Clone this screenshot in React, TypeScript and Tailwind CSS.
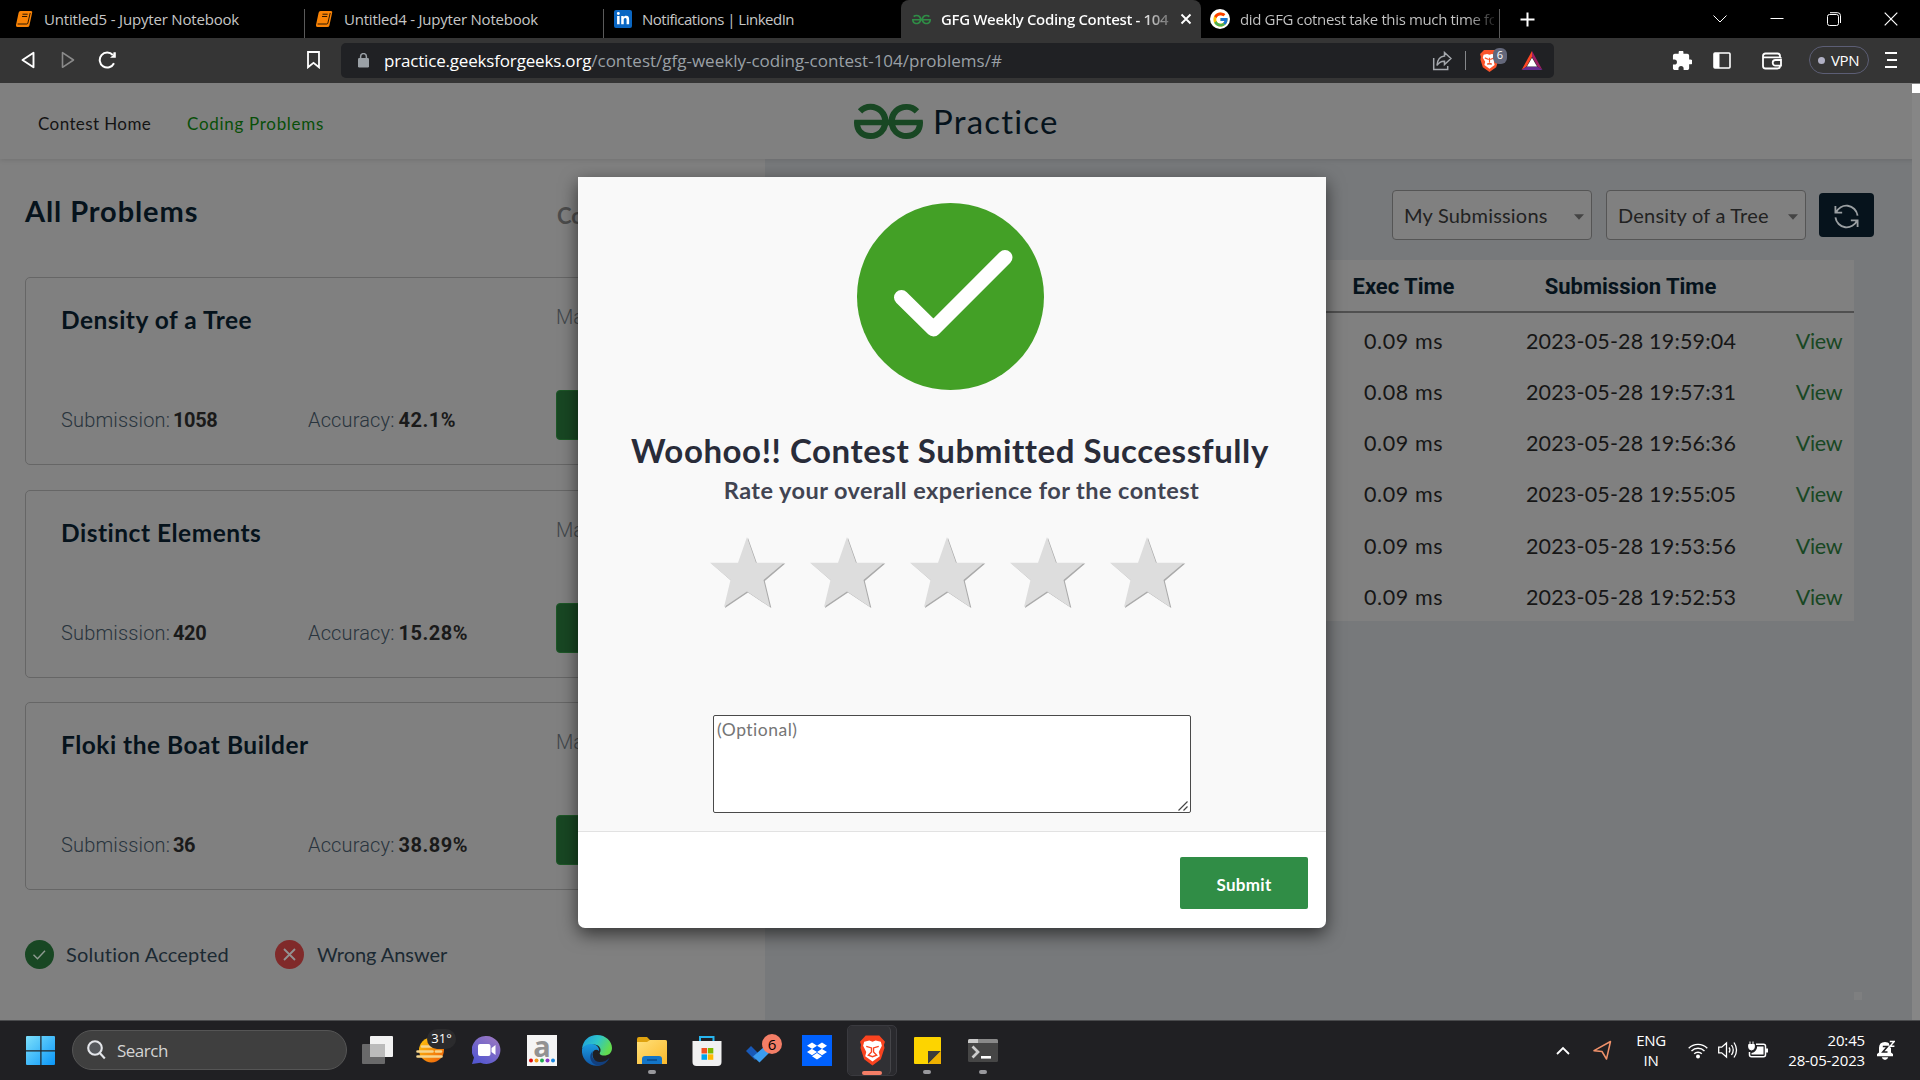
import React from "react";
import { FcGoogle } from "react-icons/fc";
import { FaDropbox, FaLinkedinIn } from "react-icons/fa";
import { SiGeeksforgeeks } from "react-icons/si";

const problems = [
  { title: "Density of a Tree", submissions: "1058", accuracy: "42.1%" },
  { title: "Distinct Elements", submissions: "420", accuracy: "15.28%" },
  { title: "Floki the Boat Builder", submissions: "36", accuracy: "38.89%" },
];

const submissions = [
  ["0.09 ms", "2023-05-28 19:59:04"],
  ["0.08 ms", "2023-05-28 19:57:31"],
  ["0.09 ms", "2023-05-28 19:56:36"],
  ["0.09 ms", "2023-05-28 19:55:05"],
  ["0.09 ms", "2023-05-28 19:53:56"],
  ["0.09 ms", "2023-05-28 19:52:53"],
];

function NotebookIcon() {
  return (
    <svg className="h-[18px] w-[18px]" viewBox="0 0 18 18">
      <path d="M5.500 1H16q1.600 0 1.200 1.600L14.400 15.500q-.4 1.500-2 1.500H2.500Q.6 17 1 15L3.600 2.700Q4 1 5.500 1z" fill="#f98306" />
      <path d="M7.500 4.200h5.200M7 6.500h5.200M2.600 14h9.200q.9 0 1.100-1L15.200 3" stroke="#2a1600" strokeWidth="1" fill="none" />
    </svg>
  );
}

function TabBar() {
  return (
    <div className="flex h-[38px] bg-black text-[15px] leading-[36px] text-[#c6c6c6]">
      <div className="flex w-[305px] items-center pl-[15px]">
        <NotebookIcon />
        <span className="ml-[11px] flex-1 tracking-[-0.18px] whitespace-nowrap">Untitled5 - Jupyter Notebook</span>
        <i className="mt-[9px] h-[29px] w-px bg-[#5a5a5a]" />
      </div>
      <div className="flex w-[299px] items-center pl-[10px]">
        <NotebookIcon />
        <span className="ml-[11px] flex-1 tracking-[-0.22px] whitespace-nowrap">Untitled4 - Jupyter Notebook</span>
        <i className="mt-[9px] h-[29px] w-px bg-[#5a5a5a]" />
      </div>
      <div className="flex w-[297px] items-center pl-[10px]">
        <span className="flex h-[18px] w-[18px] items-center justify-center rounded-[2px] bg-[#0a66c2] text-white">
          <FaLinkedinIn size={14} />
        </span>
        <span className="ml-[10px] tracking-[-0.5px] whitespace-nowrap">Notifications | LinkedIn</span>
      </div>
      <div className="flex w-[300px] items-center rounded-t-[8px] bg-[#353535] pl-[11px] font-semibold text-white">
        <SiGeeksforgeeks size={19} color="#2f8d46" />
        <span className="ml-[10px] w-[234px] overflow-hidden bg-gradient-to-r from-white from-85% to-[#555] bg-clip-text tracking-[-0.35px] whitespace-nowrap text-transparent">
          GFG Weekly Coding Contest - 104
        </span>
        <svg className="ml-[5px] h-[12px] w-[12px]" viewBox="0 0 12 12">
          <path d="M1.500 1.500l9 9M10.500 1.500l-9 9" stroke="#fff" strokeWidth="1.900" />
        </svg>
      </div>
      <div className="flex w-[299px] items-center pl-[9px]">
        <span className="flex h-[20px] w-[20px] items-center justify-center rounded-full bg-white">
          <FcGoogle size={17} />
        </span>
        <span className="ml-[10px] w-[254px] overflow-hidden bg-gradient-to-r from-[#c6c6c6] from-90% to-[#222] bg-clip-text tracking-[-0.36px] whitespace-nowrap text-transparent">
          did GFG cotnest take this much time for
        </span>
        <i className="mt-[9px] ml-auto h-[29px] w-px bg-[#5a5a5a]" />
      </div>
      <div className="flex flex-1 items-center pl-[20px]">
        <svg className="h-[15px] w-[15px]" viewBox="0 0 15 15">
          <path d="M7.500.5v14M.5 7.500h14" stroke="#fff" strokeWidth="2" />
        </svg>
        <svg className="ml-[177px] h-[14px] w-[16px]" viewBox="0 0 16 14" fill="none" stroke="#fff">
          <path d="M1.500 3.500L8 10l6.500-6.500" />
        </svg>
        <svg className="ml-[42px] h-[14px] w-[14px]" viewBox="0 0 14 14">
          <path d="M.5 6.500h13" stroke="#fff" />
        </svg>
        <svg className="ml-[43px] h-[14px] w-[14px]" viewBox="0 0 14 14" fill="none" stroke="#fff">
          <rect x=".5" y="2.500" width="11" height="11" rx="2" />
          <path d="M3 .7h7.500q3 0 3 3V11" />
        </svg>
        <svg className="ml-[43px] h-[14px] w-[14px]" viewBox="0 0 14 14" stroke="#fff" strokeWidth="1.200">
          <path d="M.7.7l12.600 12.600M13.300.7L.7 13.300" />
        </svg>
      </div>
    </div>
  );
}

function Toolbar() {
  return (
    <div className="flex h-[45px] items-center bg-[#353535] pl-[21px]">
      <svg className="-mt-px h-[18px] w-[14px]" viewBox="0 0 14 18" fill="none" stroke="#fff" strokeWidth="1.900" strokeLinejoin="round">
        <path d="M12.500 1.700v14.600L1.500 9z" />
      </svg>
      <svg className="-mt-px ml-[26px] h-[18px] w-[14px]" viewBox="0 0 14 18" fill="none" stroke="#8a8a8a" strokeWidth="1.600" strokeLinejoin="round">
        <path d="M1.500 1.700v14.600L12.500 9z" />
      </svg>
      <svg className="-mt-px ml-[23px] h-[18px] w-[19px]" viewBox="0 0 19 18" fill="none" stroke="#fff" strokeWidth="2">
        <path d="M16 12.300A7.500 7.500 0 1 1 14.800 4" />
        <path d="M12 6.800h5.800V1.200h-2.300l-.3 2.800z" fill="#fff" stroke="none" />
      </svg>
      <svg className="-mt-px ml-[190px] h-[18px] w-[13px]" viewBox="0 0 13 18" fill="none" stroke="#fff" strokeWidth="1.800">
        <path d="M1 1h11v15.300l-5.500-4.500L1 16.300z" />
      </svg>
      <div className="ml-[21px] flex h-[35px] w-[1213px] items-center rounded-[5px] bg-[#202124] pl-[17px] text-[17px] text-[#9aa0a6]">
        <svg className="h-[15px] w-[11px]" viewBox="0 0 11 15">
          <rect y="5" width="11" height="9.500" rx="1.200" fill="#9aa0a6" />
          <path d="M2.600 6V3.500a2.900 2.900 0 0 1 5.800 0V6" fill="none" stroke="#9aa0a6" strokeWidth="1.500" />
        </svg>
        <span className="ml-[15px] tracking-[-0.18px] text-white">practice.geeksforgeeks.org</span>
        <span>/contest/gfg-weekly-coding-contest-104/problems/#</span>
        <svg className="ml-auto h-[20px] w-[20px]" viewBox="0 0 20 20" fill="none" stroke="#a5a8ad" strokeWidth="1.500">
          <path d="M1.700 7v11.500h14V15M12.500 1.500l6.500 6-6.500 6v-3.300q-5-.2-7.500 4.300.4-8.500 7.500-9.400z" />
        </svg>
        <i className="ml-[13px] h-[19px] w-px bg-[#85878a]" />
        <div className="relative ml-[14px] h-[22px] w-[19px]">
          <svg viewBox="0 0 24 28" className="h-[22px] w-[19px]">
            <path d="M5 0h14l5 5-1 4 .5 3-3 10-8.500 6-8.500-6-3-10L1 9 0 5z" fill="#fb542b" />
            <path d="M4.500 6l4.500-1 3 1 3-1 4.500 1 1 4-3 5 1 4-6.500 5-6.500-5 1-4-3-5z" fill="#fff" />
            <path d="M6 10l5 2M18 10l-5 2M9 18l3-1 3 1M12 10v6" stroke="#fb542b" strokeWidth="1.500" />
          </svg>
          <span className="absolute -top-[2px] left-[13px] flex h-[16px] w-[14px] items-center justify-center rounded-[6px] bg-[#63677a] text-[11px] text-white">6</span>
        </div>
        <svg className="mr-[11px] ml-[22px] h-[19px] w-[22px]" viewBox="0 0 22 20">
          <path d="M11 0L0 20l5-3.500L11 6z" fill="#ff4724" />
          <path d="M11 0l11 20-5-3.500L11 6z" fill="#9e1f63" />
          <path d="M0 20h22l-5-3.500H5z" fill="#662d91" />
          <path d="M11 7.200l5.300 9.200H5.700z" fill="#fff" />
        </svg>
      </div>
      <svg className="ml-[118px] h-[20px] w-[20px]" viewBox="1 2 21 21" fill="#fff">
        <path d="M20.500 11H19V7c0-1.100-.9-2-2-2h-4V3.500a2.500 2.500 0 0 0-5 0V5H4c-1.100 0-2 .9-2 2v3.800h1.500a2.700 2.700 0 0 1 0 5.400H2V20c0 1.100.9 2 2 2h3.800v-1.500a2.700 2.700 0 0 1 5.400 0V22H17c1.100 0 2-.9 2-2v-4h1.500a2.500 2.500 0 0 0 0-5z" />
      </svg>
      <svg className="ml-[21px] h-[17px] w-[18px]" viewBox="0 0 18 17">
        <rect x="1" y="1" width="16" height="15" rx="1" fill="none" stroke="#fff" strokeWidth="1.600" />
        <path d="M1 1h5.500v15H1z" fill="#fff" />
      </svg>
      <svg className="ml-[31px] h-[18px] w-[20px]" viewBox="0 0 20 18" fill="none" stroke="#fff" strokeWidth="1.800">
        <path d="M18 5.500V4q0-2.500-2.500-2.500h-12Q1 1.500 1 4v10q0 2.500 2.500 2.500h12q2.500 0 2.500-2.500M1.500 5.300H18q1 .2 1 1.200M19 8h-5.500a2.800 2.800 0 0 0 0 5.600H19z" />
      </svg>
      <div className="-mt-px ml-[27px] flex h-[28px] w-[60px] items-center rounded-full border border-[#5c5e75] pl-[8px] text-[15px] text-white">
        <i className="h-[7px] w-[7px] rounded-full bg-[#b0b0c4]" />
        <span className="ml-[6px] tracking-[-0.400px]">VPN</span>
      </div>
      <svg className="-mt-px ml-[16px] h-[18px] w-[12px]" viewBox="0 0 12 18" stroke="#fff" strokeWidth="2">
        <path d="M0 2h12M2 9h10M0 16h12" />
      </svg>
    </div>
  );
}

function ProblemCard({ title, submissions: count, accuracy }: { title: string; submissions: string; accuracy: string }) {
  return (
    <div className="flex h-[188px] w-[715px] rounded-[5px] border border-[#666] pl-[35px]">
      <div className="w-[495px] pt-[26px]">
        <h3 className="text-[24.500px] leading-[32px] font-bold tracking-[0.5px] text-[#06131c]">{title}</h3>
        <div className="mt-[70px] flex font-['Roboto'] text-[20px] leading-[28px] font-light tracking-[0.15px] text-[#29343d]">
          <div className="w-[247px]">
            Submission: <b className="-ml-[2px] font-bold tracking-[-0.4px] text-[#1a1a1a]">{count}</b>
          </div>
          <div>
            Accuracy: <b className="-ml-[1px] font-bold tracking-[0.5px] text-[#1a1a1a]">{accuracy}</b>
          </div>
        </div>
      </div>
      <div className="flex flex-col items-start pt-[25px] font-['Roboto'] text-[20px] leading-[28px] font-light text-[#42474b]">
        <span>Marks</span>
        <div className="mt-[59px] h-[50px] w-[140px] rounded-[4px] border border-[#1d5727] bg-[#184723]" />
      </div>
    </div>
  );
}

function ProblemsPanel() {
  return (
    <section className="h-[861px] w-[765px] pl-[25px]">
      <div className="flex pt-[32px]">
        <h2 className="w-[532px] text-[29px] leading-[40px] font-bold tracking-[0.900px] text-[#06131c]">All Problems</h2>
        <span className="pt-[5px] text-[22px] leading-[40px] font-bold text-[#4c4c4c]">Contest</span>
      </div>
      <div className="mt-[41px] flex flex-col gap-[24.500px]">
        {problems.map((p) => (
          <ProblemCard key={p.title} {...p} />
        ))}
      </div>
      <div className="mt-[49px] flex items-center text-[20px] leading-[30px] text-[#1b2932]">
        <svg className="h-[29px] w-[29px]" viewBox="0 0 29 29">
          <circle cx="14.500" cy="14.500" r="14.500" fill="#184723" />
          <path d="M8.500 14.800l4 4 7.500-8" fill="none" stroke="#8f9b92" strokeWidth="1.400" />
        </svg>
        <span className="ml-[12px] w-[209px] tracking-[0.2px]">Solution Accepted</span>
        <svg className="h-[29px] w-[29px]" viewBox="0 0 29 29">
          <circle cx="14.500" cy="14.500" r="14.500" fill="#802a2a" />
          <path d="M9 9l11 11M20 9L9 20" fill="none" stroke="#929292" strokeWidth="1.800" />
        </svg>
        <span className="ml-[13px] tracking-[-0.05px]">Wrong Answer</span>
      </div>
    </section>
  );
}

function Select({ label }: { label: string }) {
  return (
    <div className="flex h-[50px] w-[200px] items-center rounded-[4px] border border-[#555] bg-[#808080] pr-[7px] pl-[11px] text-[20px] text-[#222]">
      <span className="flex-1 tracking-[0.2px] whitespace-nowrap">{label}</span>
      <svg className="mt-[3px] h-[6px] w-[10px]" viewBox="0 0 11 6">
        <path d="M0 0h11L5.500 6z" fill="#444" />
      </svg>
    </div>
  );
}

function SubmissionsPanel() {
  return (
    <section className="h-[861px] w-[1147px] bg-[#77797b]">
      <div className="flex items-center justify-end gap-[14px] pt-[31px] pr-[38px]">
        <Select label="My Submissions" />
        <Select label="Density of a Tree" />
        <div className="-ml-px flex h-[44px] w-[55px] items-center justify-center rounded-[4px] bg-[#06131c]">
          <svg className="mt-[3px] h-[27px] w-[27px]" viewBox="0 0 28 28" fill="none" stroke="#9a9fa2" strokeWidth="1.900">
            <path d="M2.500 3v7H9.500M25.500 25v-7H18.500M3 10A11.800 12 0 0 1 25.500 13M25 18A11.800 12 0 0 1 2.500 15" />
          </svg>
        </div>
      </div>
      <div className="mt-[20px] ml-[24px] w-[1065px] bg-[#808080]">
        <div className="flex h-[53px] justify-end border-b-2 border-[#505050] pt-[2px] text-center font-['Roboto'] text-[22px] leading-[50px] font-bold text-[#06131c]">
          <span className="w-[149px]">Exec Time</span>
          <span className="w-[305px]">Submission Time</span>
          <span className="w-[71px]" />
        </div>
        {submissions.map(([time, date]) => (
          <div key={date} className="flex h-[51.300px] justify-end pt-[2.500px] text-center text-[21.500px] leading-[51px] text-[#161616]">
            <span className="w-[149px] tracking-[0.600px]">{time}</span>
            <span className="w-[306px] tracking-[0.180px]">{date}</span>
            <span className="w-[70px] tracking-[-0.3px] text-[#184723]">View</span>
          </div>
        ))}
      </div>
      <div className="mt-[371px] mr-[50px] ml-auto h-[8px] w-[8px] bg-[#7e7f80]" />
    </section>
  );
}

function Modal() {
  return (
    <div className="absolute top-[94px] left-[578px] flex h-[751px] w-[748px] flex-col rounded-[7px] rounded-t-none bg-white shadow-[0_6px_18px_rgba(0,0,0,0.6)]">
      <div className="flex h-[655px] flex-col items-center border-b border-[#e2e2e2] bg-[#f9f9f9] pt-[25px]">
        <svg className="mr-[5px] h-[188px] w-[188px]" viewBox="0 0 188 188">
          <circle cx="94.500" cy="94.500" r="93.500" fill="#43a026" />
          <path d="M45.500 95.500L77.500 127 149 55.500" fill="none" stroke="#fff" strokeWidth="15" strokeLinecap="round" strokeLinejoin="round" />
        </svg>
        <h1 className="mt-[38px] mr-[4px] text-[33px] leading-[44px] font-bold tracking-[0.570px] whitespace-nowrap text-[#292c39]">
          Woohoo!! Contest Submitted Successfully
        </h1>
        <h2 className="ml-[19px] text-[23.500px] leading-[36px] font-bold tracking-[0.450px] whitespace-nowrap text-[#414452]">
          Rate your overall experience for the contest
        </h2>
        <div className="mt-[29px] mr-[8px] flex gap-[24px]">
          {[0, 1, 2, 3, 4].map((n) => (
            <svg key={n} className="h-[72px] w-[76px]" viewBox="0 0 76 72">
              <path d="M38 1L47 26.500H75.300L54.800 44 61.300 71 38 55.500 15 71 21.500 44 1.500 26.500H29.500z" fill="#aaa" />
              <path d="M37 0L46 25.800H74L53.500 43 60 70 37 54.500 14 70 20.500 43 0 25.800H28z" fill="#ddd" />
            </svg>
          ))}
        </div>
        <div className="relative mt-[106px] h-[98px] w-[478px]">
          <textarea
            placeholder="(Optional)"
            className="block h-[98px] w-[478px] resize-none rounded-[2px] border border-[#4a4a4a] bg-white px-[3px] py-[1px] text-[17.500px] leading-[26px] tracking-[0.500px] outline-none placeholder:text-[#757575]"
          />
          <svg className="absolute right-[3px] bottom-[2px] h-[10px] w-[10px]" viewBox="0 0 10 10" stroke="#444" strokeWidth="1.200">
            <path d="M.5 9.500l9-9M5.500 9.500l4-4" />
          </svg>
        </div>
      </div>
      <div className="flex flex-1 items-start justify-end pt-[25px] pr-[18px]">
        <button className="h-[52px] w-[128px] rounded-[2px] bg-[#308d46] pt-[4px] text-[17px] font-bold tracking-[0.300px] text-white">Submit</button>
      </div>
    </div>
  );
}

function Page() {
  return (
    <main className="relative h-[937px] overflow-hidden bg-[#808080] font-['Lato',sans-serif]">
      <nav className="relative flex h-[76px] pl-[38px] text-[17px] leading-[24px] shadow-[0_1px_5px_rgba(0,0,0,0.12)]">
        <span className="w-[149px] pt-[29px] tracking-[0.400px] text-[#141414]">Contest Home</span>
        <span className="w-[667px] pt-[29px] tracking-[0.700px] text-[#084f08]">Coding Problems</span>
        <SiGeeksforgeeks className="mt-[4px]" size={69} color="#184723" />
        <span className="pt-[18px] pl-[10px] text-[33px] leading-[40px] tracking-[1.200px] text-[#06131c]">Practice</span>
      </nav>
      <div className="flex">
        <ProblemsPanel />
        <SubmissionsPanel />
      </div>
      <div className="absolute top-0 right-0 h-[937px] w-[8px] bg-[#868686]">
        <div className="mt-px h-[9px] bg-white" />
      </div>
      <Modal />
    </main>
  );
}

function TaskbarApp({ width, marker, children }: { width: string; marker?: boolean; children: React.ReactNode }) {
  return (
    <div className={`flex h-[60px] flex-col items-center pt-[14px] ${width}`}>
      <div className="h-[32px]">{children}</div>
      {marker && <i className="mt-[3px] h-[4px] w-[8px] rounded-full bg-[#98989c]" />}
    </div>
  );
}

function Taskbar() {
  return (
    <footer className="flex h-[60px] border-t border-[#4a4b4d] bg-[#202023] text-white">
      <div className="flex h-[58px] items-center pl-[26px]">
        <svg className="mt-[2px] h-[30px] w-[30px]" viewBox="0 0 30 30">
          <defs>
            <linearGradient id="win" x1="0" y1="0" x2="1" y2="1">
              <stop offset="0" stopColor="#7de0fb" />
              <stop offset="1" stopColor="#0a96f8" />
            </linearGradient>
          </defs>
          <path d="M1 0h13.300v14.300H0V1q0-1 1-1zM15.500 0H28q1 0 1 1v13.300H15.500zM0 15.500h14.300V29H1q-1 0-1-1zM15.500 15.500H29V28q0 1-1 1H15.500z" fill="url(#win)" />
        </svg>
        <div className="ml-[16px] flex h-[40px] w-[275px] items-center rounded-full border border-[#555] bg-[#3f3f3f] pl-[14px] text-[17px] text-[#d4d4d4]">
          <svg className="h-[20px] w-[19px]" viewBox="0 0 19 20" fill="none" stroke="#e4e6ea" strokeWidth="2.100">
            <circle cx="8" cy="8" r="6.800" fill="#55585c" />
            <path d="M12.800 13l5 5.500" />
          </svg>
          <span className="mt-[1px] ml-[11px] tracking-[-0.500px]">Search</span>
        </div>
      </div>
      <TaskbarApp width="ml-[14px] w-[32px]">
        <svg className="h-[30px] w-[31px]" viewBox="0 0 31 30">
          <rect x="8" y="1" width="23" height="21" rx="1" fill="#f2f2f2" />
          <rect x="0" y="9" width="23" height="20" rx="1" fill="#777" fillOpacity=".85" />
          <rect x="8" y="9" width="15" height="13" fill="#bbb" />
        </svg>
      </TaskbarApp>
      <TaskbarApp width="ml-[22px] w-[42px]">
        <div className="relative h-[30px] w-[40px]">
          <svg className="h-[30px] w-[30px]" viewBox="0 0 30 30">
            <defs>
              <linearGradient id="sun" x1="0" y1="0" x2="1" y2="1">
                <stop offset="0" stopColor="#ffc80a" />
                <stop offset="1" stopColor="#ee5c0c" />
              </linearGradient>
            </defs>
            <circle cx="15.500" cy="15" r="12.500" fill="url(#sun)" />
            <path d="M6 11.500h12M1.500 16.500h15M20 16.500h5M1.500 21.500h24" stroke="#f6d58c" strokeWidth="2.600" strokeLinecap="round" />
          </svg>
          <span className="absolute -top-[6px] left-[11px] flex h-[20px] w-[29px] items-center justify-center rounded-full bg-[#2b2b2d] text-[13px]">31°</span>
        </div>
      </TaskbarApp>
      <TaskbarApp width="ml-[14px] w-[30px]">
        <svg className="h-[30px] w-[29px]" viewBox="0 0 29 30">
          <defs>
            <linearGradient id="chat" x1="1" y1="0" x2=".3" y2="1">
              <stop offset="0" stopColor="#a27bc0" />
              <stop offset="1" stopColor="#5558d0" />
            </linearGradient>
          </defs>
          <path d="M14.500 1a14 14 0 1 1-6 26.700L0 29l2-6.500A14 14 0 0 1 14.500 1z" fill="url(#chat)" />
          <rect x="6" y="9" width="12.500" height="12" rx="2" fill="#fff" />
          <path d="M19.500 13l4-3v10l-4-3z" fill="#fff" />
        </svg>
      </TaskbarApp>
      <TaskbarApp width="ml-[25px] w-[32px]">
        <div className="flex h-[31px] w-[30px] flex-col items-center bg-[#f5f5f5]">
          <span className="text-[29px] leading-[21px] font-bold text-[#929292]">a</span>
          <svg className="mt-[2px] h-[5px] w-[26px]" viewBox="0 0 26 5">
            <circle cx="2" cy="2.500" r="2" fill="#e00b0b" />
            <circle cx="7.500" cy="2.500" r="2" fill="#f39a18" />
            <circle cx="13" cy="2.500" r="2" fill="#1dab50" />
            <circle cx="18.500" cy="2.500" r="2" fill="#8a35c8" />
            <circle cx="24" cy="2.500" r="2" fill="#1686e0" />
          </svg>
        </div>
      </TaskbarApp>
      <TaskbarApp width="ml-[23px] w-[32px]">
        <svg className="h-[31px] w-[30px]" viewBox="0 0 30 31">
          <defs>
            <linearGradient id="edge1" x1="0" y1="0" x2="1" y2=".4">
              <stop offset="0" stopColor="#1c9be0" />
              <stop offset=".55" stopColor="#2fc5c8" />
              <stop offset="1" stopColor="#62dc50" />
            </linearGradient>
            <linearGradient id="edge2" x1="0" y1="0" x2="0" y2="1">
              <stop offset="0" stopColor="#1b9de2" />
              <stop offset="1" stopColor="#0f55a5" />
            </linearGradient>
          </defs>
          <path d="M0 14C1 5 7 0 15 0c9 0 15 6.500 15 13 0 5-3.500 7.500-8 7.500-3.500 0-5-1.500-4-3 2-3.500-1-8-6-8C6 9.500 1 12 0 14z" fill="url(#edge1)" />
          <path d="M0 14c2-4 6-5.500 10-5 4.500.5 7.500 3.500 7 7-3-3-7 0-6.500 4 .6 5.500 6 10 10 9.500-2 1-4 1.300-6 1.300C6 30.500-1 23 0 14z" fill="url(#edge2)" />
          <path d="M11 16c-3 5 1 11 7 11 4 0 7-1.500 9.500-4.300C25.500 27 21 31 15.500 30.500 8 29 6 20 11 16z" fill="#123f7d" />
        </svg>
      </TaskbarApp>
      <TaskbarApp width="ml-[23px] w-[32px]" marker>
        <svg className="h-[30px] w-[30px]" viewBox="0 0 30 30">
          <defs>
            <linearGradient id="folder" x1="0" y1="0" x2="1" y2="1">
              <stop offset="0" stopColor="#ffe07a" />
              <stop offset="1" stopColor="#fbb92b" />
            </linearGradient>
          </defs>
          <path d="M0 4q0-2 2-2h8l3 3h15q2 0 2 2v10H0z" fill="#dfa20f" />
          <path d="M0 7h10l3-2h15q2 0 2 2v22H0z" fill="url(#folder)" />
          <path d="M5 29v-5q0-3 3-3h14q3 0 3 3v5z" fill="#1375c8" />
          <path d="M10 25h10" stroke="#0a4a8a" strokeWidth="1.500" />
        </svg>
      </TaskbarApp>
      <TaskbarApp width="ml-[23px] w-[32px]">
        <svg className="h-[31px] w-[30px]" viewBox="0 0 30 31">
          <path d="M8 7V2h13.500v5" fill="none" stroke="#27b5ee" strokeWidth="2" />
          <path d="M.5 6h29v21q0 4-4 4H4.500q-4 0-4-4z" fill="#f1f1f1" />
          <path d="M9.500 13H15v5.500H9.500z" fill="#f25022" />
          <path d="M15.800 13h5.500v5.500h-5.500z" fill="#7fba00" />
          <path d="M9.500 19.300H15v5.500H9.500z" fill="#00a4ef" />
          <path d="M15.800 19.300h5.500v5.500h-5.500z" fill="#ffb900" />
        </svg>
      </TaskbarApp>
      <TaskbarApp width="ml-[21px] w-[37px]">
        <div className="relative h-[30px] w-[37px]">
          <svg className="mt-[5px] ml-[2px] h-[23px] w-[30px]" viewBox="0 0 30 23">
            <path d="M5 6l9 9-5 5-9-9z" fill="#1859b8" />
            <path d="M26 0l5 5-17.500 17.500L7 16.500z" fill="#3a9cf0" />
          </svg>
          <span className="absolute -top-[6px] left-[18px] flex h-[20px] w-[20px] items-center justify-center rounded-full bg-[#f37e67] text-[15px] text-black">6</span>
        </div>
      </TaskbarApp>
      <TaskbarApp width="ml-[20px] w-[32px]">
        <div className="flex h-[31px] w-[30px] items-center justify-center bg-[#0061fe]">
          <FaDropbox size={20} />
        </div>
      </TaskbarApp>
      <div className="mt-[4px] ml-[14px] flex h-[51px] w-[50px] rounded-[5px] border border-[#3a3a3f] bg-[#2a2a2e]">
        <div className="flex w-[43px] flex-col items-center rounded-[5px] border-r border-[#454549] bg-[#303034] pt-[9px] pl-[6px]">
          <svg className="h-[31px] w-[25px]" viewBox="0 0 24 29">
            <path d="M5.500 0h13L24 6l-1 3 .5 3-3.500 11-8 6-8-6L.5 12 1 9 0 6z" fill="#f9431f" />
            <path d="M4 6l5-1 3 1 3-1 5 1 1 4-3 6 1 4-7 5-7-5 1-4-3-6z" fill="#fff" />
            <path d="M6 10.500l5 1.500v4l-3 3 4 1.500 4-1.500-3-3v-4l5-1.500" stroke="#f9431f" strokeWidth="1.300" fill="none" />
          </svg>
          <i className="mt-[5px] h-[4px] w-[20px] rounded-full bg-[#f37e67]" />
        </div>
      </div>
      <TaskbarApp width="ml-[15px] w-[30px]" marker>
        <svg className="mt-[1px] h-[29px] w-[27px]" viewBox="0 0 27 29">
          <rect y="1" width="27" height="27" rx="1" fill="#fdd400" />
          <path d="M14 28V15h13z" fill="#3b3b3b" />
          <path d="M14 28l13-13v13z" fill="#eeb000" />
        </svg>
      </TaskbarApp>
      <TaskbarApp width="ml-[25px] w-[32px]" marker>
        <svg className="h-[30px] w-[30px]" viewBox="0 0 30 30">
          <rect y="4" width="30" height="23" rx="1.500" fill="#464646" />
          <path d="M0 8V5.500Q0 4 1.500 4H10v4z" fill="#c9c9c9" />
          <path d="M10 4h18.500Q30 4 30 5.500V8H10z" fill="#898989" />
          <path d="M4.500 11.500l5.500 5.500-5.500 5.500" fill="none" stroke="#ccc" strokeWidth="2.700" />
          <path d="M13 22.300h10" stroke="#fff" strokeWidth="2.600" />
        </svg>
      </TaskbarApp>
      <div className="ml-auto flex h-[58px] items-center pr-[25px] text-[15px] leading-[20px]">
        <svg className="h-[9px] w-[14px]" viewBox="0 0 14 9" fill="none" stroke="#fff" strokeWidth="1.800">
          <path d="M1 8l6-6 6 6" />
        </svg>
        <svg className="ml-[23px] h-[21px] w-[19px]" viewBox="0 0 19 21" fill="none" stroke="#f0916a" strokeWidth="1.500" strokeLinejoin="round">
          <path d="M17.500 1.500L13.500 19 9 11.500l-8-.8z" />
        </svg>
        <div className="ml-[24px] w-[30px] text-center tracking-[-0.3px]">
          ENG
          <br />
          IN
        </div>
        <svg className="ml-[22px] h-[17px] w-[20px]" viewBox="0 0 20 17" fill="none" stroke="#fff" strokeWidth="1.400">
          <path d="M.7 6.200a13.200 13.200 0 0 1 18.600 0M3.500 9a9.200 9.200 0 0 1 13 0M6.200 11.800a5.400 5.400 0 0 1 7.600 0" />
          <circle cx="10" cy="14.500" r="2" fill="#fff" stroke="none" />
        </svg>
        <svg className="ml-[10px] h-[18px] w-[20px]" viewBox="0 0 20 18" fill="none" stroke="#fff" strokeWidth="1.300">
          <path d="M.7 6.200h3L8.500 2v14l-4.800-4.200h-3zM11 6.500q1.800 2.500 0 5M13.500 4q3.500 5 0 10M16 1.500q5 7.500 0 15" />
        </svg>
        <svg className="ml-[10px] h-[18px] w-[20px]" viewBox="0 0 20 18">
          <path d="M8 3.200h7.500q2 0 2 2v8.500q0 2-2 2h-12q-2 0-2-2V11" fill="none" stroke="#fff" strokeWidth="1.500" />
          <path d="M9 5.500h6.500v8H3.500V12q4-.5 5.500-5zM18 7.500h2v4h-2z" fill="#fff" />
          <path d="M2 .5v3M5 .5v3M.7 3.500h5.600v3q0 2-2.800 2.500Q.7 8.500.7 6.500z" stroke="#fff" fill="#fff" />
        </svg>
        <div className="ml-[17px] w-[80px] text-right tracking-[-0.150px] whitespace-nowrap">
          20:45
          <br />
          28-05-2023
        </div>
        <svg className="ml-[12px] h-[20px] w-[18px]" viewBox="0 0 18 20">
          <path d="M8 2Q2 2 2 8v4.500L0 14v2.200h16V14l-2-1.500V8Q14 2 8 2zM4.800 17.200h6.400Q10.500 20 8 20t-3.200-2.800z" fill="#fff" />
          <path d="M5.800 6.500h4.700l-4.700 5.500h4.700" fill="none" stroke="#202023" strokeWidth="1.600" />
          <path d="M11 0h7v7.500h-5z" fill="#202023" />
          <path d="M12.800 1.500h4.400l-4.200 4.700h4.400" fill="none" stroke="#fff" strokeWidth="1.400" />
        </svg>
      </div>
    </footer>
  );
}

export default function App() {
  return (
    <div className="h-[1080px] w-[1920px] overflow-hidden font-['Open_Sans',sans-serif]">
      <TabBar />
      <Toolbar />
      <Page />
      <Taskbar />
    </div>
  );
}
